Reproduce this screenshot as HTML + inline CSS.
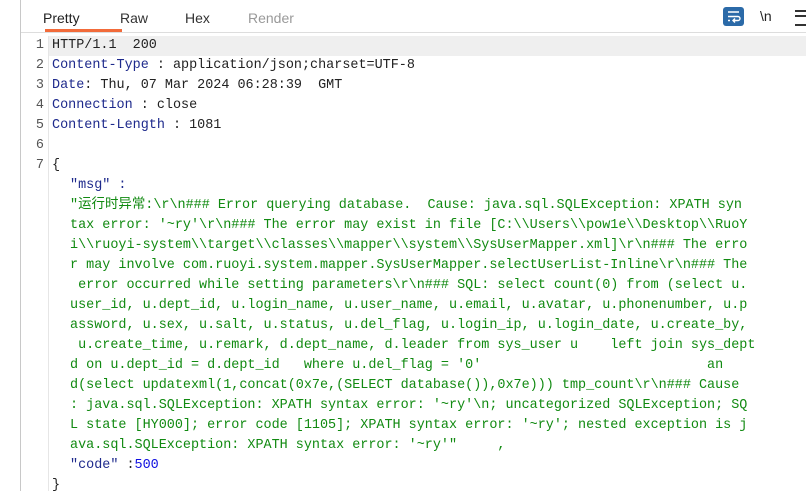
<!DOCTYPE html>
<html><head><meta charset="utf-8"><style>
body{margin:0;width:806px;height:491px;background:#fff;overflow:hidden;position:relative;font-family:"Liberation Sans",sans-serif}
.lb{position:absolute;left:20px;top:0;width:1px;height:491px;background:#c8c8c8}
.gut{position:absolute;left:48px;top:36px;width:1px;height:455px;background:#e6e6e6}
.tabs{position:absolute;top:0;left:21px;right:0;height:32px;border-bottom:1px solid #ddd}
.tab{position:absolute;top:10px;font-size:14px;color:#333}
.ul{position:absolute;left:24px;top:29px;width:77px;height:3px;background:#f26b3a}
.hl{position:absolute;left:49px;right:0;top:36px;height:20px;background:#efefef}
.code{position:absolute;left:0;top:36px;width:806px;font-family:"Liberation Mono","Noto Sans CJK SC",monospace;font-size:13.45px;line-height:20px;color:#222}
.r{height:20px;position:relative}
.n{position:absolute;left:30px;width:14px;text-align:right;color:#555}
.t,.i{white-space:pre;position:absolute}
.t{left:52px}
.i{left:70px}
.k{color:#1e2a8c}.s{color:#118a11}.v{color:#1010e0}
.wrap{position:absolute;left:723px;top:7px;width:21px;height:19px;background:#2b6aa8;border-radius:3px}
</style></head><body>
<div class="lb"></div>
<div class="tabs">
<div class="tab" style="left:22px;color:#222">Pretty</div>
<div class="tab" style="left:99px">Raw</div>
<div class="tab" style="left:164px">Hex</div>
<div class="tab" style="left:227px;color:#999">Render</div>
<div class="ul"></div>
</div>
<div class="wrap"><svg width="21" height="19" viewBox="0 0 21 19"><path d="M5 5h11M5 9.5h10a2 2 0 0 1 0 4H10M12 11.5l-2 2 2 2M5 13.5h2" stroke="#fff" stroke-width="1.4" fill="none"/></svg></div>
<div style="position:absolute;left:760px;top:8px;font-size:14px;color:#222">\n</div>
<div style="position:absolute;left:795px;top:10px;width:11px;height:12px;border-top:2px solid #333;border-bottom:2px solid #333"><div style="margin-top:3px;height:2px;background:#333"></div></div>
<div class="hl"></div>
<div class="gut"></div>
<div class="code"><div class="r"><span class="n">1</span><span class="t">HTTP/1.1  200</span></div><div class="r"><span class="n">2</span><span class="t"><span class="k">Content-Type</span> : application/json;charset=UTF-8</span></div><div class="r"><span class="n">3</span><span class="t"><span class="k">Date</span>: Thu, 07 Mar 2024 06:28:39  GMT</span></div><div class="r"><span class="n">4</span><span class="t"><span class="k">Connection</span> : close</span></div><div class="r"><span class="n">5</span><span class="t"><span class="k">Content-Length</span> : 1081</span></div><div class="r"><span class="n">6</span></div><div class="r"><span class="n">7</span><span class="t">{</span></div><div class="r"><span class="i k">"msg" :</span></div><div class="r"><span class="i s">"运行时异常:\r\n### Error querying database.  Cause: java.sql.SQLException: XPATH syn</span></div><div class="r"><span class="i s">tax error: '~ry'\r\n### The error may exist in file [C:\\Users\\pow1e\\Desktop\\RuoY</span></div><div class="r"><span class="i s">i\\ruoyi-system\\target\\classes\\mapper\\system\\SysUserMapper.xml]\r\n### The erro</span></div><div class="r"><span class="i s">r may involve com.ruoyi.system.mapper.SysUserMapper.selectUserList-Inline\r\n### The</span></div><div class="r"><span class="i s"> error occurred while setting parameters\r\n### SQL: select count(0) from (select u.</span></div><div class="r"><span class="i s">user_id, u.dept_id, u.login_name, u.user_name, u.email, u.avatar, u.phonenumber, u.p</span></div><div class="r"><span class="i s">assword, u.sex, u.salt, u.status, u.del_flag, u.login_ip, u.login_date, u.create_by,</span></div><div class="r"><span class="i s"> u.create_time, u.remark, d.dept_name, d.leader from sys_user u    left join sys_dept</span></div><div class="r"><span class="i s">d on u.dept_id = d.dept_id   where u.del_flag = '0'                            an</span></div><div class="r"><span class="i s">d(select updatexml(1,concat(0x7e,(SELECT database()),0x7e))) tmp_count\r\n### Cause</span></div><div class="r"><span class="i s">: java.sql.SQLException: XPATH syntax error: '~ry'\n; uncategorized SQLException; SQ</span></div><div class="r"><span class="i s">L state [HY000]; error code [1105]; XPATH syntax error: '~ry'; nested exception is j</span></div><div class="r"><span class="i s">ava.sql.SQLException: XPATH syntax error: '~ry'"     ,</span></div><div class="r"><span class="i"><span class="k">"code"</span> :<span class="v">500</span></span></div><div class="r"><span class="t">}</span></div></div>
</body></html>
